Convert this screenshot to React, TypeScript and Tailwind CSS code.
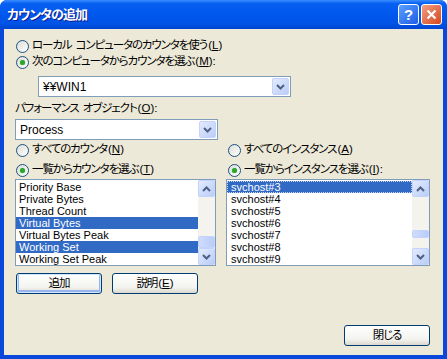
import React from "react";

const counters = [
  { t: "Priority Base" },
  { t: "Private Bytes" },
  { t: "Thread Count" },
  { t: "Virtual Bytes", sel: true },
  { t: "Virtual Bytes Peak" },
  { t: "Working Set", sel: true },
  { t: "Working Set Peak" },
];

const instances = ["svchost#3", "svchost#4", "svchost#5", "svchost#6", "svchost#7", "svchost#8", "svchost#9"];

function Chevron({ up }: { up?: boolean }) {
  return (
    <svg width="9" height="6" viewBox="0 0 9 6">
      <path
        d={up ? "M1 5 L4.5 1.5 L8 5" : "M1 1 L4.5 4.5 L8 1"}
        fill="none"
        stroke="#4D6185"
        strokeWidth="2"
      />
    </svg>
  );
}

function ScrollBtn({ up }: { up?: boolean }) {
  return (
    <div className="w-[17px] h-[17px] shrink-0 rounded-[2px] border border-[#C3D3FD] bg-[linear-gradient(135deg,#E3EBFE,#BACDF7)] flex items-center justify-center">
      <Chevron up={up} />
    </div>
  );
}

// japanese label text: narrow kana, mnemonic suffix kept at normal spacing
function Jp({ parts, k, colon }: { parts: string[]; k?: string; colon?: boolean }) {
  return (
    <span className="whitespace-nowrap flex items-center">
      {parts.map((p, i) => (
        <React.Fragment key={i}>
          {i > 0 && <span className="w-[4px] inline-block" />}
          <span className="tracking-[-1.1px]">{p}</span>
        </React.Fragment>
      ))}
      {k && (
        <span className="ml-[1px]">
          (<u>{k}</u>){colon ? ":" : ""}
        </span>
      )}
    </span>
  );
}

function Radio({ checked, children }: { checked?: boolean; children: React.ReactNode }) {
  return (
    <div className="flex items-center h-4 gap-[3px]">
      <span className="w-[13px] h-[13px] rounded-full border border-[#1C5180] bg-[linear-gradient(135deg,#DCDCD7,#FFFFFF)] flex items-center justify-center shrink-0">
        {checked && <span className="w-[5px] h-[5px] rounded-full bg-[#2BA52B] shadow-[0_0_1px_#5FD35F]" />}
      </span>
      {children}
    </div>
  );
}

function Combo({ value, className }: { value: string; className: string }) {
  return (
    <div className={"h-[21px] border border-[#7F9DB9] bg-white flex text-[12px] " + className}>
      <div className="flex-1 pl-[4px] flex items-center">{value}</div>
      <div className="w-[17px] m-[1px] rounded-[2px] border border-[#C3D3FD] bg-[linear-gradient(135deg,#E3EBFE,#BACDF7)] flex items-center justify-center">
        <Chevron />
      </div>
    </div>
  );
}

function XpButton({ children, def, className = "" }: { children: React.ReactNode; def?: boolean; className?: string }) {
  return (
    <div
      className={
        "w-[86px] h-[21px] rounded-[3px] border border-[#003C74] bg-[linear-gradient(to_bottom,#FFFFFF,#F3F3EF_70%,#DCD8CE)] flex items-center justify-center " +
        (def ? "shadow-[inset_0_0_0_1px_#CEE7FF,inset_0_-1px_0_2px_#9AB4EE] " : "") +
        className
      }
    >
      {children}
    </div>
  );
}

export default function App() {
  return (
    <div className="w-[447px] h-[359px] bg-white font-['Liberation_Sans','Noto_Sans_CJK_JP',sans-serif] [font-feature-settings:'palt'] text-[11.5px] text-black">
      <div className="w-full h-full flex flex-col rounded-t-[7px] overflow-hidden bg-[#0A48DC]">
        <div className="h-[29px] shrink-0 flex items-center pl-[7px] pr-[5px] bg-[linear-gradient(to_bottom,#3A8EFF_0%,#0860F2_12%,#0058EE_45%,#0054E6_80%,#0145D2_100%)]">
          <span className="text-white font-bold text-[13px] tracking-[-1px] [text-shadow:1px_1px_0_#0F1B8F] flex-1">カウンタの追加</span>
          <div className="flex gap-[2px]">
            <div className="w-[21px] h-[21px] rounded-[3px] border border-white bg-[linear-gradient(135deg,#5BA0FF,#1E5CE8)] flex items-center justify-center text-white font-bold text-[15px] leading-none">
              ?
            </div>
            <div className="w-[21px] h-[21px] rounded-[3px] border border-white bg-[linear-gradient(135deg,#F0A081,#D6461E)] flex items-center justify-center">
              <svg width="11" height="11" viewBox="0 0 11 11">
                <path d="M1.5 1.5 L9.5 9.5 M9.5 1.5 L1.5 9.5" stroke="white" strokeWidth="2.2" />
              </svg>
            </div>
          </div>
        </div>

        <div className="flex-1 mx-[4px] mb-[4px] bg-[#ECE9D8] pl-3 pr-[13px] pt-[9px] pb-[9px] flex flex-col">
          <Radio>
            <Jp parts={["ローカル", "コンピュータのカウンタを使う"]} k="L" />
          </Radio>
          <Radio checked>
            <Jp parts={["次のコンピュータからカウンタを選ぶ"]} k="M" colon />
          </Radio>
          <Combo value="¥¥WIN1" className="mt-[6px] ml-[22px] w-[253px]" />

          <div className="mt-[4px] -ml-px h-4 flex items-center">
            <Jp parts={["パフォーマンス", "オブジェクト"]} k="O" colon />
          </div>
          <Combo value="Process" className="mt-[2px] -ml-px w-[203px]" />

          <div className="mt-[2px] -ml-px flex gap-[10px]">
            <div className="w-[203px] flex flex-col">
              <div className="pl-px flex flex-col gap-[4px]">
                <Radio>
                  <Jp parts={["すべてのカウンタ"]} k="N" />
                </Radio>
                <Radio checked>
                  <Jp parts={["一覧からカウンタを選ぶ"]} k="T" />
                </Radio>
              </div>
              <div className="mt-px h-[87px] border border-[#7F9DB9] bg-white flex">
                <div className="flex-1 pt-px text-[11px]">
                  {counters.map((c) => (
                    <div
                      key={c.t}
                      className={"h-[12px] leading-[12px] pl-[3px] whitespace-nowrap " + (c.sel ? "bg-[#316AC5] text-white" : "")}
                    >
                      {c.t}
                    </div>
                  ))}
                </div>
                <div className="w-[17px] bg-[#F4F3EE] flex flex-col">
                  <ScrollBtn up />
                  <div className="flex-1 flex flex-col justify-end">
                    <div className="h-[12px] rounded-[2px] border border-[#C3D3FD] bg-[linear-gradient(90deg,#CFDCFD,#BACDF7)]" />
                  </div>
                  <ScrollBtn />
                </div>
              </div>
            </div>

            <div className="w-[206px] flex flex-col">
              <div className="pl-[2px] flex flex-col gap-[4px]">
                <Radio>
                  <Jp parts={["すべてのインスタンス"]} k="A" />
                </Radio>
                <Radio checked>
                  <Jp parts={["一覧からインスタンスを選ぶ"]} k="I" colon />
                </Radio>
              </div>
              <div className="mt-px h-[87px] border border-[#7F9DB9] bg-white flex">
                <div className="flex-1 pt-px text-[11px]">
                  {instances.map((s, i) => (
                    <div
                      key={s}
                      className={
                        "h-[12px] leading-[10px] pl-[3px] whitespace-nowrap " +
                        (i === 0 ? "bg-[#316AC5] text-white border border-dotted border-[#C9D6F2]" : "border border-transparent")
                      }
                    >
                      {s}
                    </div>
                  ))}
                </div>
                <div className="w-[17px] bg-[#F4F3EE] flex flex-col">
                  <ScrollBtn up />
                  <div className="flex-1 flex flex-col justify-end pb-[10px]">
                    <div className="h-[8px] rounded-[2px] border border-[#C3D3FD] bg-[linear-gradient(90deg,#CFDCFD,#BACDF7)]" />
                  </div>
                  <ScrollBtn />
                </div>
              </div>
            </div>
          </div>

          <div className="mt-[7px] flex gap-[10px]">
            <XpButton def>
              <Jp parts={["追加"]} />
            </XpButton>
            <XpButton>
              <Jp parts={["説明"]} k="E" />
            </XpButton>
          </div>

          <div className="mt-auto flex justify-end">
            <XpButton>
              <Jp parts={["閉じる"]} />
            </XpButton>
          </div>
        </div>
      </div>
    </div>
  );
}
